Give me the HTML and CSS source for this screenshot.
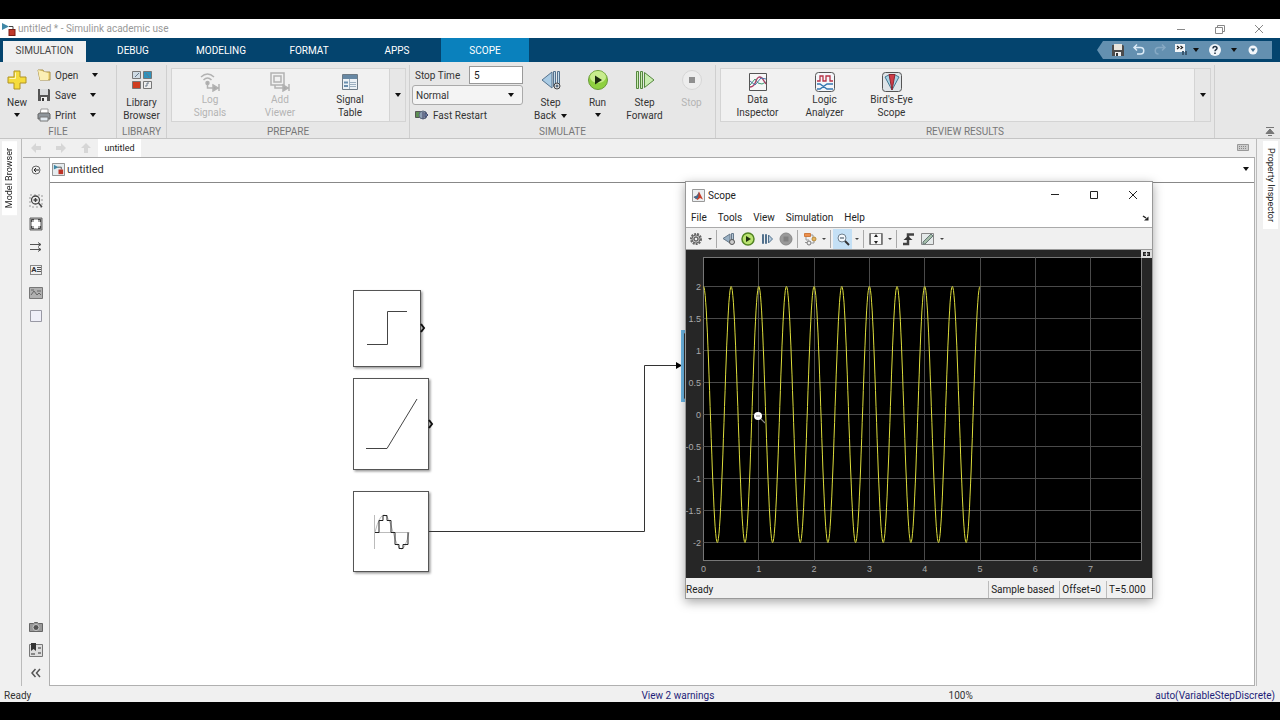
FILE: index.html
```html
<!DOCTYPE html>
<html lang="en">
<head>
    <meta charset="UTF-8">
    <meta name="viewport" content="width=device-width, initial-scale=1.0">
    <title>untitled * - Simulink academic use</title>
    <link rel="stylesheet" href="styles.css">
</head>
<body>
    <div class="app">
        <header class="titlebar">
            <svg class="app-icon" width="14" height="14" viewBox="0 0 14 14"><path d="M0 1l7 3.500L0 8z" fill="#3f87a6"/><path d="M7 4.500h4V8" fill="none" stroke="#444"/><rect x="7" y="7.500" width="6" height="6" fill="#c0392b" stroke="#7a1f16"/></svg>
            <span class="title">untitled * - Simulink academic use</span>
            <div class="window-buttons">
                <button aria-label="Minimize"><svg width="10" height="10"><path d="M1 5.500h8" stroke="#888"/></svg></button>
                <button aria-label="Restore"><svg width="10" height="10" fill="none" stroke="#888"><path d="M.5 3.500h7v6h-7zM2.500 3V1.500h7v6H8"/></svg></button>
                <button aria-label="Close"><svg width="10" height="10"><path d="M1 1l8 8M9 1L1 9" stroke="#888"/></svg></button>
            </div>
        </header>

        <nav class="tabs">
            <button class="tab active">SIMULATION</button>
            <button class="tab">DEBUG</button>
            <button class="tab">MODELING</button>
            <button class="tab">FORMAT</button>
            <button class="tab">APPS</button>
            <button class="tab context">SCOPE</button>
            <div class="quick-access">
                <button aria-label="Save"><svg width="14" height="14" viewBox="0 0 14 14"><path d="M1 2h11l1 1v10H1z" fill="#4b4b4b"/><path d="M3 1h8v6H3z" fill="#e8e4dc"/><path d="M4 9h6v4H4z" fill="#eee"/><path d="M5 10h2v3H5z" fill="#333"/></svg></button>
                <button aria-label="Undo"><svg width="14" height="14" viewBox="0 0 14 14" fill="none" stroke="#dcebf7" stroke-width="1.500"><path d="M5 1.500L2 4.500l3 3M2 4.500h6.500a3.200 3.200 0 010 6.500H5"/></svg></button>
                <button aria-label="Redo"><svg width="14" height="14" viewBox="0 0 14 14" fill="none" stroke="#86a9c4" stroke-width="1.500"><path d="M9 1.500l3 3-3 3M12 4.500H5.500a3.200 3.200 0 000 6.500"/></svg></button>
                <button aria-label="Find"><svg width="14" height="14" viewBox="0 0 14 14"><path d="M1 1h10v8H1z" fill="#f4f6f8"/><path d="M3 3l2 1.500L3 6M6.500 3l2 1.500-2 1.500" fill="none" stroke="#222" stroke-width="1.200"/><path d="M8 8h2v4H8zM11 8h2v4h-2z" fill="#3b5870"/></svg></button>
                <button class="narrow" aria-label="Find options"><i class="caret"></i></button>
                <button class="wide" aria-label="Help"><svg width="14" height="14" viewBox="0 0 14 14"><circle cx="7" cy="7" r="6" fill="#f2f6fa"/><path d="M5 5.500c0-3 4-2.500 4-.3C9 6.700 7 6.500 7 8.300M7 9.500v1.500" fill="none" stroke="#234" stroke-width="1.500"/></svg></button>
                <button class="narrow" aria-label="Help options"><i class="caret"></i></button>
                <button class="wide" aria-label="Customize"><svg width="10" height="10" viewBox="0 0 10 10"><circle cx="5" cy="5" r="4.500" fill="#f2f6fa"/><path d="M2.500 3.500h5L5 7z" fill="#44708f"/></svg></button>
            </div>
        </nav>

        <div class="ribbon">
            <section class="group">
                <div class="group-body">
                    <button class="big new">
                        <svg width="20" height="20" viewBox="0 0 20 20"><path d="M7 1h6v6h6v6h-6v6H7v-6H1V7h6z" fill="#f5dc3c" stroke="#b09325"/><path d="M8.500 2.500v6h-6" fill="none" stroke="#fff7b8"/></svg>
                        New<i class="caret below"></i>
                    </button>
                    <div class="stack">
                        <div class="row"><button><svg width="14" height="14" viewBox="0 0 14 14"><path d="M1 2h5l1 2h6v8H3z" fill="#f3dc82" stroke="#a88f47"/><path d="M3 12L1 2l10 3v7z" fill="#fbefb5"/></svg>Open</button><button aria-label="Open options"><i class="caret"></i></button></div>
                        <div class="row"><button><svg width="14" height="14" viewBox="0 0 14 14"><path d="M1 1h11l1 1v11H1z" fill="#555"/><path d="M3 1h8v6H3z" fill="#d8dadc"/><path d="M4 9h6v4H4z" fill="#eee"/><path d="M5 10h2v3H5z" fill="#333"/></svg>Save</button><button aria-label="Save options"><i class="caret"></i></button></div>
                        <div class="row"><button><svg width="14" height="14" viewBox="0 0 14 14"><path d="M4 1h7v5H3z" fill="#fff" stroke="#999"/><path d="M1 6l2-1h9l1 1v5H1z" fill="#8f969c" stroke="#666"/><path d="M3 9h8v4H3z" fill="#e3ebf2" stroke="#777"/></svg>Print</button><button aria-label="Print options"><i class="caret"></i></button></div>
                    </div>
                </div>
                <h2>FILE</h2>
            </section>

            <section class="group library">
                <div class="group-body">
                    <button class="big">
                        <svg width="20" height="20" viewBox="0 0 20 20"><g stroke="#777"><path d="M.5 1.500h8v7h-8z" fill="#cfdbe4"/><path d="M11.500 1.500h8v7h-8z" fill="#2f93bd"/><path d="M.5 11.500h8v7h-8z" fill="#cf3d20"/><path d="M11.500 11.500h8v7h-8z" fill="#eee"/></g><path d="M3 7l4-4M14 3l3 4M13 16h2v-3h2" stroke="#678" fill="none"/></svg>
                        Library<br>Browser
                    </button>
                </div>
                <h2>LIBRARY</h2>
            </section>

            <section class="group prepare">
                <div class="group-body">
                    <div class="gallery">
                        <button class="big" disabled>
                            <svg width="20" height="20" viewBox="0 0 20 20" fill="none" stroke="#b2b2b2" stroke-width="1.500"><path d="M1 5q6.500-6 13 0M3.500 8q4-4 8 0M7.500 11v5H19"/><path d="M13 13l5 3-5 3zM19 12v7" fill="#aaa"/><circle cx="7.500" cy="11" r="1.500" fill="#aaa"/></svg>
                            Log<br>Signals
                        </button>
                        <button class="big" disabled>
                            <svg width="20" height="20" viewBox="0 0 20 20" fill="none" stroke="#b2b2b2" stroke-width="1.500"><path d="M1 1h13v12H1zM4 4h7v6H4zM5 13v3h14"/><path d="M13 13l5 3-5 3zM19 12v7" fill="#aaa"/></svg>
                            Add<br>Viewer
                        </button>
                        <button class="big">
                            <svg width="16" height="20" viewBox="0 0 16 20"><path d="M.5 2.500h15v15H.5z" fill="#edf2f6" stroke="#6e7b86"/><path d="M1 3h14v4H1z" fill="#6788a4"/><path d="M2 9.500h4v2H2zM2 13h4v2H2z" fill="#6b8fae"/><path d="M8 10.500h6M8 12.500h6M8 14.500h6M7.500 7v10" stroke="#9db0c0"/></svg>
                            Signal<br>Table
                        </button>
                    </div>
                    <button class="gallery-more" aria-label="More"><i class="caret"></i></button>
                </div>
                <h2>PREPARE</h2>
            </section>

            <section class="group simulate">
                <div class="group-body">
                    <div class="settings">
                        <div class="row"><label for="stop-time">Stop Time</label><input id="stop-time" type="text" value="5"></div>
                        <div class="mode"><select aria-label="Simulation mode"><option>Normal</option></select><i class="caret"></i></div>
                        <div class="row"><button><svg width="14" height="12" viewBox="0 0 14 12"><path d="M.5 2.500h6v6h-6z" fill="#5d8f53" stroke="#555"/><circle cx="8" cy="6" r="4" fill="#8ea0b4" stroke="#5c6a7c"/><path d="M8 3v7M10 3.500l3 2.500-3 2.500z" fill="#6f8fb5" stroke="#446"/></svg>Fast Restart</button></div>
                    </div>
                    <button class="big">
                        <svg width="20" height="20" viewBox="0 0 20 20" stroke="#55728d"><path d="M11 2v16L1 10z" fill="#a9cbe4"/><path d="M12.500 1.500h2v15h-2zM16.500 1.500h2v12h-2z" fill="#c3dbec"/><circle cx="16" cy="16" r="3" fill="#ddd" stroke="#444"/><circle cx="16" cy="16" r="1" fill="#444"/></svg>
                        Step<br><span>Back &nbsp;<i class="caret"></i></span>
                    </button>
                    <button class="big">
                        <svg width="20" height="20" viewBox="0 0 20 20"><circle cx="10" cy="10" r="9.500" fill="#8fd040" stroke="#6b9c3b"/><ellipse cx="10" cy="7" rx="8" ry="6" fill="#c8ec8d"/><path d="M7 5.500l7 4.500-7 4.500z" fill="#1b2a10"/></svg>
                        Run<i class="caret below"></i>
                    </button>
                    <button class="big">
                        <svg width="20" height="20" viewBox="0 0 20 20" fill="#c9edb0" stroke="#55863f"><path d="M1.500 1.500h2v17h-2zM5.500 1.500h2v17h-2zM9.500 2.500v15L19 10z"/></svg>
                        Step<br>Forward
                    </button>
                    <button class="big" disabled>
                        <svg width="20" height="20" viewBox="0 0 20 20"><circle cx="10" cy="10" r="9.500" fill="#ededed" stroke="#d6d6d6"/><path d="M7 7h6v6H7z" fill="#8f8f8f"/></svg>
                        Stop
                    </button>
                </div>
                <h2>SIMULATE</h2>
            </section>

            <section class="group review">
                <div class="group-body">
                    <div class="gallery">
                        <button class="big">
                            <svg width="20" height="20" viewBox="0 0 20 20" fill="none"><path d="M1.500 1.500h17v17h-17z" fill="#f7f7f7" stroke="#555"/><path d="M2 13l5-6 3 4 4 1 4-2" stroke="#3b9a72"/><path d="M2 15q4 0 6-6t6-3l4 6" stroke="#a83c62" stroke-width="1.300"/><path d="M2 9l5 4 6-7 5 1" stroke="#4b74a8"/></svg>
                            Data<br>Inspector
                        </button>
                        <button class="big">
                            <svg width="20" height="20" viewBox="0 0 20 20" fill="none"><rect x=".5" y=".5" width="19" height="19" rx="3" fill="#f4f6fa" stroke="#555"/><path d="M2 9h3V4h3v5h3V4h4v5h3" stroke="#b83246" stroke-width="1.300"/><path d="M2 12h3l7 5h6M2 17h3l7-5h6" stroke="#3577b0" stroke-width="1.300"/></svg>
                            Logic<br>Analyzer
                        </button>
                        <button class="big">
                            <svg width="20" height="20" viewBox="0 0 20 20"><rect x=".5" y=".5" width="19" height="19" rx="3" fill="#dfe4e8" stroke="#555"/><path d="M10 18L3 5q7-5 14 0z" fill="#a8d4e6" stroke="#457890"/><path d="M10 18L7 2.500h6z" fill="#cf3c48" stroke="#8a2731"/></svg>
                            Bird's-Eye<br>Scope
                        </button>
                    </div>
                    <button class="gallery-more" aria-label="More"><i class="caret"></i></button>
                </div>
                <h2>REVIEW RESULTS</h2>
            </section>
            <button class="collapse" aria-label="Collapse toolstrip"><svg width="10" height="10"><path d="M1 1.500h8M5 3L1 7.500h8zM3 9.500h4" fill="#777" stroke="#777"/></svg></button>
        </div>

        <div class="workspace">
            <aside class="side left"><button class="side-tab">Model Browser</button></aside>

            <main class="editor">
                <div class="doc-tabs">
                    <button aria-label="Back" disabled><svg width="12" height="12"><path d="M6 1v3h5v4H6v3L1 6z" fill="#d6d6d6"/></svg></button>
                    <button aria-label="Forward" disabled><svg width="12" height="12"><path d="M6 1v3H1v4h5v3l5-5z" fill="#d6d6d6"/></svg></button>
                    <button aria-label="Up" disabled><svg width="12" height="12"><path d="M6 1L1 6h3v5h4V6h3z" fill="#d6d6d6"/></svg></button>
                    <button class="doc-tab">untitled</button>
                    <svg class="keyboard" width="12" height="8"><path d="M.5.5h11v6H.5z" fill="#ccc" stroke="#999"/><path d="M2 2.500h8M2 4.500h8" stroke="#888" stroke-dasharray="1 1"/></svg>
                </div>
                <div class="editor-body">
                    <div class="palette">
                        <button class="hide-bar" aria-label="Hide browser"><svg width="10" height="10" fill="none" stroke="#666"><circle cx="5" cy="5" r="4"/><path d="M8 5H3M5 3L3 5l2 2" stroke="#222"/></svg></button>
                        <button aria-label="Zoom"><svg width="14" height="14" fill="none" stroke="#444"><path d="M1 1h12v12H1z" stroke="#999" stroke-dasharray="2 2"/><circle cx="6.500" cy="6" r="4" fill="#f4f4f4" stroke-width="1.300"/><path d="M4.500 6h4M6.500 4v4M9.500 9l3.500 4" stroke-width="1.500"/></svg></button>
                        <button aria-label="Fit to view"><svg width="14" height="14"><path d="M1 1h12v12H1z" fill="#aaa" stroke="#666"/><path d="M5 3h4v2h2v4H9v2H5V9H3V5h2z" fill="#fff"/><path d="M2.500 5V2.500H5M9 2.500h2.500V5M11.500 9v2.500H9M5 11.500H2.500V9" fill="none" stroke="#444"/></svg></button>
                        <button aria-label="Sample time"><svg width="14" height="14" fill="none" stroke="#555"><path d="M1 4.500h11M1 9.500h11M9 2.500l3 2-3 2M9 7.500l3 2-3 2"/></svg></button>
                        <button class="annotation" aria-label="Annotation"><span>A<svg width="4" height="6"><path d="M0 1.500h4M0 3.500h4M0 5.500h4" stroke="#555"/></svg></span></button>
                        <button aria-label="Image"><svg width="14" height="14"><path d="M.5 1.500h13v11H.5z" fill="#b0b0b0" stroke="#777"/><path d="M2 9l3-4 3 4 2-2 2 2M2 4h3M8 5h4" fill="none" stroke="#666"/></svg></button>
                        <button aria-label="Area"><svg width="14" height="14"><path d="M1.500 1.500h11v11h-11z" fill="#efeff8" stroke="#9999a4"/></svg></button>
                        <button class="snapshot" aria-label="Snapshot"><svg width="14" height="12"><path d="M.5 2.500h4l1-1h3l1 1h4v8H.5z" fill="#999" stroke="#666"/><circle cx="7" cy="6.500" r="3" fill="#555" stroke="#ccc"/></svg></button>
                        <button aria-label="Bookmarks"><svg width="14" height="14"><path d="M.5 1.500h13v12H.5z" fill="#ddd" stroke="#777"/><path d="M2 0h5v8L4.500 6 2 8z" fill="#333"/><path d="M9 4h3v2H9zM9 9h3v2H9zM2 10h4v2H2z" fill="#888"/></svg></button>
                        <button aria-label="Collapse palette"><svg width="10" height="10" fill="none" stroke="#555" stroke-width="1.500"><path d="M4.500 1L1 5l3.500 4M9 1L5.500 5 9 9"/></svg></button>
                    </div>
                    <div class="sheet">
                        <div class="breadcrumb">
                            <svg width="13" height="13" viewBox="0 0 14 14"><path d="M.5.5h13v13H.5z" fill="#e6ecef" stroke="#888"/><path d="M2 2l5 2.500L2 7z" fill="#3f87a6"/><path d="M6 4.500h4V7" fill="none" stroke="#555"/><path d="M7 7h5v5H7z" fill="#bf3326"/></svg>
                            <a href="#">untitled</a>
                            <button aria-label="History"><i class="caret"></i></button>
                        </div>
                        <div class="canvas">
                            <svg class="diagram" role="img" aria-label="Step, Ramp and Sine Wave blocks, Sine Wave wired to Scope">
                                <defs>
                                    <filter id="lift" x="-10%" y="-10%" width="130%" height="130%"><feDropShadow dx="1.500" dy="1.500" stdDeviation="1" flood-opacity=".4"/></filter>
                                </defs>
                                <g class="block">
                                    <rect x="303.500" y="107.500" width="67" height="76"/>
                                    <rect x="303.500" y="195.500" width="75" height="91"/>
                                    <rect x="303.500" y="308.500" width="75" height="80"/>
                                </g>
                                <g class="port">
                                    <path d="M371 141l3 4-3 4M379 237l3 4-3 4"/>
                                </g>
                                <g class="glyph">
                                    <path d="M317 161.500h20.500v-33H357"/>
                                    <path d="M316 265.500h21L367 216"/>
                                    <path class="faint" d="M324.500 332v34M324 349.500h35M325 349q9-34 18 0t16 0"/>
                                    <path class="stairs" d="M325 349.500h4v-12h4v-5h4v5h4v12h4v12h4v4h4v-4h5v-12"/>
                                </g>
                                <path class="wire" d="M379 348.500h215.500v-166H627"/>
                                <path d="M626 179l6 3.500-6 3.500z"/>
                                <path class="selected" d="M640 148.500h-7.500v69h7.500"/>
                                <path class="wire" d="M640 150.500h-5.500v65h5.500"/>
                            </svg>

                            <div class="scope">
                                <div class="scope-title">
                                    <svg width="13" height="13"><path d="M.5.5h12v12H.5z" fill="#eceff1" stroke="#999"/><path d="M1.500 8L5 6.500 7 2.500l4 8-3-1.500-2.500 2z" fill="#c7402a"/><path d="M1.500 8L5 6.500 7 3 6 9l-2 1z" fill="#3c6f96"/></svg>
                                    <span>Scope</span>
                                    <div class="window-buttons">
                                        <button aria-label="Minimize scope"><svg width="10" height="10"><path d="M1 4.500h8" stroke="#222"/></svg></button>
                                        <button aria-label="Maximize scope"><svg width="10" height="10"><path d="M1.500 1.500h7v7h-7z" fill="none" stroke="#222"/></svg></button>
                                        <button aria-label="Close scope"><svg width="10" height="10"><path d="M1 1l8 8M9 1L1 9" stroke="#222"/></svg></button>
                                    </div>
                                </div>
                                <div class="scope-menu">
                                    <button>File</button><button>Tools</button><button>View</button><button>Simulation</button><button>Help</button>
                                    <svg class="dock" width="8" height="8"><path d="M1 2l3 2" stroke="#222" stroke-width="1.500"/><path d="M6.500 2.500v4H2z" fill="#222"/></svg>
                                </div>
                                <div class="scope-tools">
                                    <button aria-label="Configuration"><svg width="14" height="14" fill="none" stroke="#666"><circle cx="7" cy="7" r="5" stroke-width="2" stroke-dasharray="2 1"/><circle cx="7" cy="7" r="4"/><circle cx="7" cy="7" r="2" stroke-width="1.500"/></svg></button>
                                    <button class="drop" aria-label="Configuration options"></button><hr>
                                    <button aria-label="Step back"><svg width="14" height="14" stroke="#66788a"><path d="M8 2v9L1 6.500z" fill="#9ab1c4"/><path d="M9.500 1.500h2v9h-2z" fill="#b7c8d6"/><circle cx="10" cy="10" r="2.500" fill="#ccc" stroke="#555"/></svg></button>
                                    <button aria-label="Run"><svg width="14" height="14"><circle cx="7" cy="7" r="6" fill="#b9e36f" stroke="#528423" stroke-width="1.500"/><path d="M5 4l5 3-5 3z" fill="#1c2e0c"/></svg></button>
                                    <button aria-label="Step forward"><svg width="14" height="14" fill="#b4cbdc" stroke="#51708c"><path d="M2.500 2.500h1v9h-1zM5.500 2.500h1v9h-1zM8.500 3v8l4-4z"/></svg></button>
                                    <button aria-label="Stop"><svg width="14" height="14"><circle cx="7" cy="7" r="6" fill="#999" stroke="#888"/><path d="M4.500 4.500h5v5h-5z" fill="#808080"/></svg></button><hr>
                                    <button aria-label="Highlight block"><svg width="14" height="14" stroke="#999"><path d="M1.500 1.500h6v3h-6z" fill="#ec8f4c" stroke="#d07a3c"/><path d="M8 3h2v3M3 5v3h3" fill="none"/><circle cx="11" cy="7" r="2" fill="#e6b45e" stroke="#b58a3e"/><path d="M2 10.500h2M8.500 11H11V9" fill="none"/><circle cx="6" cy="11" r="2" fill="#eee" stroke="#777"/></svg></button>
                                    <button class="drop" aria-label="Highlight options"></button><hr>
                                    <button class="on" aria-label="Zoom out"><svg width="14" height="14"><circle cx="6" cy="6" r="4" fill="#f3f8fc" stroke="#70808e"/><path d="M4 6h4" stroke="#345"/><path d="M9 9l4 4" stroke="#333" stroke-width="2"/></svg></button>
                                    <button class="drop" aria-label="Zoom options"></button><hr>
                                    <button aria-label="Scale axes"><svg width="14" height="14"><path d="M.5 1.500h13v11H.5z" fill="#f7f7f7" stroke="#888"/><path d="M1.500 1v12M12.500 1v12" stroke="#777"/><path d="M7 2l2 3H5zM7 12L5 9h4z" fill="#222"/></svg></button>
                                    <button class="drop" aria-label="Scale options"></button><hr>
                                    <button aria-label="Triggers"><svg width="14" height="14"><path d="M1 12h5V2.500h6" fill="none" stroke="#444" stroke-width="2.500"/><path d="M1.500 8L6 4l4.500 4z" fill="#333"/></svg></button>
                                    <button aria-label="Measurements"><svg width="14" height="14"><path d="M.5 1.500h12v11H.5z" fill="#e4e9e9" stroke="#888"/><path d="M2 10l8-8 2 2-8 8H2z" fill="#a3bda8" stroke="#677"/></svg></button>
                                    <button class="drop" aria-label="Measurement options"></button>
                                </div>
                                <div class="plot">
                                    <svg id="plot" viewBox="0 0 466 328" role="img" aria-label="Sine wave, amplitude 2, 0 to 5 seconds">
                                        <rect class="axes" x="17.500" y="7.500" width="438" height="303"/>
                                        <g id="grid"></g>
                                        <path id="signal" d=""/>
                                        <circle cx="72" cy="166" r="4" fill="#fff"/>
                                        <path d="M70 166h4M75 169l4 4" stroke="#888" stroke-width="1.200"/>
                                        <path d="M455 0h11v8h-11z" fill="#ddd"/>
                                        <path d="M457 2h7v4h-7z" fill="#222"/>
                                        <path d="M460.500 1v6M458.500 4h4" stroke="#ddd"/>
                                    </svg>
                                </div>
                                <div class="scope-status">
                                    <span class="ready">Ready</span>
                                    <span class="mode-cell">Sample based</span>
                                    <span>Offset=0</span>
                                    <span class="time-cell">T=5.000</span>
                                </div>
                            </div>
                        </div>
                    </div>
                </div>
            </main>

            <aside class="side right"><button class="side-tab">Property Inspector</button></aside>
        </div>

        <footer class="statusbar">
            <span>Ready</span>
            <a href="#">View 2 warnings</a>
            <span>100%</span>
            <a href="#">auto(VariableStepDiscrete)</a>
        </footer>
    </div>
    <script>
        const left = 17.5;
        const right = 455.5;
        const topEdge = 7.5;
        const bottom = 310.5;
        const zero = 164.5;
        const perSecond = 55.3;
        const perUnit = 64;

        const toX = t => left + t * perSecond;
        const toY = v => zero - v * perUnit;

        function drawGrid() {
            let out = '';
            for (let t = 0; t <= 7; t++) {
                const x = Math.floor(toX(t)) + 0.5;
                if (t > 0) out += `<path d="M${x} ${topEdge}V${bottom}"/>`;
                out += `<text x="${toX(t)}" y="322" text-anchor="middle">${t}</text>`;
            }
            for (let v = -2; v <= 2; v += 0.5) {
                const y = toY(v);
                out += `<path d="M${left} ${y}H${right}"/>`;
                out += `<text x="15" y="${y + 3}" text-anchor="end">${v}</text>`;
            }
            document.getElementById('grid').innerHTML = out;
        }

        function drawSignal() {
            const points = [];
            for (let i = 0; i <= 500; i++) {
                const t = i / 100;
                points.push(`${toX(t).toFixed(1)} ${toY(2 * Math.cos(4 * Math.PI * t)).toFixed(1)}`);
            }
            document.getElementById('signal').setAttribute('d', 'M' + points.join('L'));
        }

        drawGrid();
        drawSignal();
    </script>
</body>
</html>
```
FILE: styles.css
```css
* {
    box-sizing: border-box;
}
body {
    margin: 0;
    padding: 19px 0 18px;
    height: 100vh;
    background-color: #000;
    font-family: Roboto, "Open Sans", sans-serif;
    font-size: 10px;
    line-height: 13px;
    color: #333;
}
button {
    display: flex;
    align-items: center;
    justify-content: center;
    padding: 0;
    border: none;
    background: none;
    font: inherit;
    color: inherit;
}
a {
    color: inherit;
    text-decoration: none;
}
svg {
    flex: none;
}
.app {
    display: flex;
    flex-direction: column;
    height: 100%;
    background-color: #f0f0f0;
}
.caret {
    display: inline-block;
    border: 3px solid transparent;
    border-top: 4px solid #111;
    border-bottom: none;
    vertical-align: middle;
}

/* title bar */
.titlebar {
    display: flex;
    align-items: center;
    height: 19px;
    padding: 0 2px;
    background-color: #fff;
    color: #999;
}
.title {
    margin-left: 2px;
}
.window-buttons {
    display: flex;
    margin-left: auto;
}
.window-buttons button {
    width: 39px;
}

/* tabs */
.tabs {
    display: flex;
    height: 24px;
    padding-left: 3px;
    background-color: #04446e;
}
.tab {
    width: 88px;
    color: #fff;
}
.tab.active {
    width: 83px;
    margin: 3px 3px 0 0;
    padding-bottom: 3px;
    background-color: #f0f0f0;
    color: #444;
}
.tab.context {
    background-color: #0a81bd;
}
.quick-access {
    display: flex;
    margin: 3px 8px 3px auto;
    padding: 0 5px 0 10px;
    background-color: #6490b0;
    clip-path: polygon(6px 0, 100% 0, 100% 100%, 6px 100%, 0 50%);
}
.quick-access button {
    width: 21px;
}
.quick-access .narrow {
    width: 10px;
}
.quick-access .wide {
    width: 28px;
}

/* ribbon */
.ribbon {
    display: flex;
    height: 77px;
    padding-top: 3px;
    border-bottom: 1px solid #c4c4c4;
    background-color: #e7e7e7;
}
.group {
    display: flex;
    flex-direction: column;
    border-right: 1px solid #cfcfcf;
}
.group h2 {
    margin: auto 0 0;
    font-size: 10px;
    font-weight: normal;
    line-height: 13px;
    text-align: center;
    color: #777;
}
.group-body {
    display: flex;
    height: 60px;
}
.library {
    width: 50px;
}
.simulate {
    width: 306px;
}
.review {
    flex: 1;
}
.big {
    display: block;
    align-self: flex-start;
    width: 47px;
    padding-top: 5px;
    text-align: center;
    white-space: nowrap;
}
.big svg {
    display: block;
    margin: 0 auto 6px;
}
.big .below {
    display: block;
    width: 6px;
    margin: 4px auto 0;
}
.big:disabled {
    color: #b4b4b4;
}
.new {
    width: 34px;
}
.library .big {
    width: 100%;
}
.stack {
    width: 82px;
}
.row {
    display: flex;
    align-items: center;
    justify-content: space-between;
    height: 20px;
}
.stack .row {
    justify-content: flex-start;
    gap: 14px;
    padding-left: 3px;
}
.stack svg {
    margin-right: 4px;
}
.gallery {
    display: flex;
    flex: 1;
    margin: 3px 0 3px 4px;
    padding-left: 3px;
    border: 1px solid #d4d4d4;
    background-color: #f1f1f1;
}
.gallery .big {
    width: 67px;
    padding-top: 3px;
}
.gallery .big svg {
    margin-bottom: 1px;
}
.prepare {
    width: 243px;
}
.prepare .gallery .big {
    width: 70px;
}
.gallery-more {
    width: 16px;
    margin: 3px 3px 3px 0;
    border: 1px solid #d4d4d4;
    border-left: none;
}
.settings {
    width: 111px;
    margin: 0 4px 0 2px;
}
.settings label {
    padding-left: 3px;
}
.settings input {
    width: 54px;
    height: 18px;
    padding: 0 4px;
    border: 1px solid #999;
    background-color: #fff;
    font: inherit;
    color: #222;
}
.settings .row button {
    gap: 4px;
    padding-left: 3px;
}
.mode {
    display: flex;
    align-items: center;
    height: 20px;
    padding-right: 8px;
    border: 1px solid #aaa;
    border-radius: 3px;
    background-color: #f4f4f4;
}
.mode select {
    flex: 1;
    padding: 0 3px;
    border: none;
    appearance: none;
    background: none;
    font: inherit;
    color: inherit;
}
.collapse {
    align-items: flex-end;
    width: 65px;
    padding: 0 5px 2px 0;
    justify-content: flex-end;
}

/* workspace */
.workspace {
    display: flex;
    flex: 1;
    min-height: 0;
}
.side {
    width: 22px;
    padding: 2px;
}
.left {
    border-right: 1px solid #bbb;
}
.right {
    width: 24px;
    padding-left: 6px;
    border-left: 1px solid #bbb;
}
.side-tab {
    width: 15px;
    padding: 7px 0;
    background-color: #fff;
    font-size: 9px;
    writing-mode: vertical-rl;
    color: #222;
}
.left .side-tab {
    transform: rotate(180deg);
}
.editor {
    display: flex;
    flex-direction: column;
    flex: 1;
    padding: 0 1px;
}
.doc-tabs {
    display: flex;
    align-items: center;
    height: 19px;
    border-bottom: 1px solid #aaa;
}
.doc-tabs button {
    width: 25px;
}
.doc-tabs .doc-tab {
    width: 43px;
    height: 100%;
    background-color: #fff;
    font-size: 9px;
    color: #222;
}
.keyboard {
    margin: 0 6px 0 auto;
}
.editor-body {
    display: flex;
    flex: 1;
    min-height: 0;
}
.palette {
    display: flex;
    flex-direction: column;
    width: 26px;
    padding-bottom: 2px;
}
.palette button {
    height: 23px;
}
.palette .hide-bar {
    margin-bottom: 8px;
}
.palette .snapshot {
    margin-top: auto;
}
.annotation span {
    width: 12px;
    border: 1px solid #888;
    font-size: 8px;
    font-weight: bold;
    line-height: 8px;
    color: #333;
}
.sheet {
    display: flex;
    flex-direction: column;
    flex: 1;
    border: 1px solid #b0b0b0;
    border-top: none;
    background-color: #fff;
}
.breadcrumb {
    display: flex;
    align-items: center;
    gap: 2px;
    height: 25px;
    padding: 0 0 2px 2px;
    border-bottom: 1px solid #888;
    font-size: 11px;
}
.breadcrumb button {
    width: 17px;
    height: 20px;
    margin-left: auto;
}
.canvas {
    position: relative;
    flex: 1;
}
.diagram {
    display: block;
    width: 100%;
    height: 100%;
}
.block {
    fill: #fff;
    stroke: #555;
    filter: url(#lift);
}
.port {
    fill: none;
    stroke: #111;
    stroke-width: 2;
}
.glyph {
    fill: none;
    stroke: #444;
}
.glyph .faint {
    stroke: #bbb;
}
.glyph .stairs {
    stroke: #222;
}
.wire {
    fill: none;
    stroke: #333;
}
.selected {
    fill: none;
    stroke: #6db9e8;
    stroke-width: 3;
}

/* scope window */
.scope {
    position: absolute;
    top: -2px;
    left: 635px;
    width: 468px;
    border: 1px solid #999;
    background-color: #fff;
    box-shadow: 0 3px 10px rgba(0, 0, 0, 0.35);
    color: #222;
}
.scope-title {
    display: flex;
    align-items: center;
    gap: 3px;
    height: 26px;
    padding-left: 6px;
}
.scope-menu {
    display: flex;
    align-items: center;
    gap: 11px;
    height: 20px;
    padding: 0 2px 0 5px;
    border-bottom: 1px solid #aaa;
}
.dock {
    margin-left: auto;
}
.scope-tools {
    display: flex;
    align-items: center;
    height: 22px;
    border-bottom: 1px solid #999;
    background-color: #f0f0f0;
}
.scope-tools button {
    width: 19px;
    height: 20px;
}
.scope-tools .on {
    background-color: #c4e0f5;
}
.scope-tools .drop {
    width: 9px;
}
.scope-tools .drop::before {
    content: "";
    border: 2px solid transparent;
    border-top-color: #444;
    border-bottom: none;
}
.scope-tools hr {
    width: 1px;
    height: 18px;
    margin: 0 2px;
    border: none;
    background-color: #aaa;
}
.plot {
    background-color: #262626;
}
.plot svg {
    display: block;
    width: 100%;
}
.axes {
    fill: #000;
    stroke: #777;
}
#grid path {
    stroke: #4a4a4a;
}
#grid text {
    font-family: "Liberation Sans", Arial, sans-serif;
    font-size: 9px;
    fill: #aaa;
}
#signal {
    fill: none;
    stroke: #dede3c;
}
.scope-status {
    display: flex;
    align-items: center;
    height: 20px;
    padding-top: 2px;
    background-color: #f0f0f0;
}
.scope-status span {
    height: 17px;
    padding: 0 5px 0 2px;
    border-left: 1px solid #bbb;
    line-height: 17px;
}
.scope-status .ready {
    flex: 1;
    padding-left: 0;
    border-left: none;
}
.scope-status .time-cell {
    width: 46px;
}

/* status bar */
.statusbar {
    display: grid;
    grid-template-columns: 50% 24% 1fr auto;
    column-gap: 2px;
    align-items: center;
    height: 16px;
    padding: 2px 5px 0 4px;
}
.statusbar a {
    color: #1e1e78;
}
```
